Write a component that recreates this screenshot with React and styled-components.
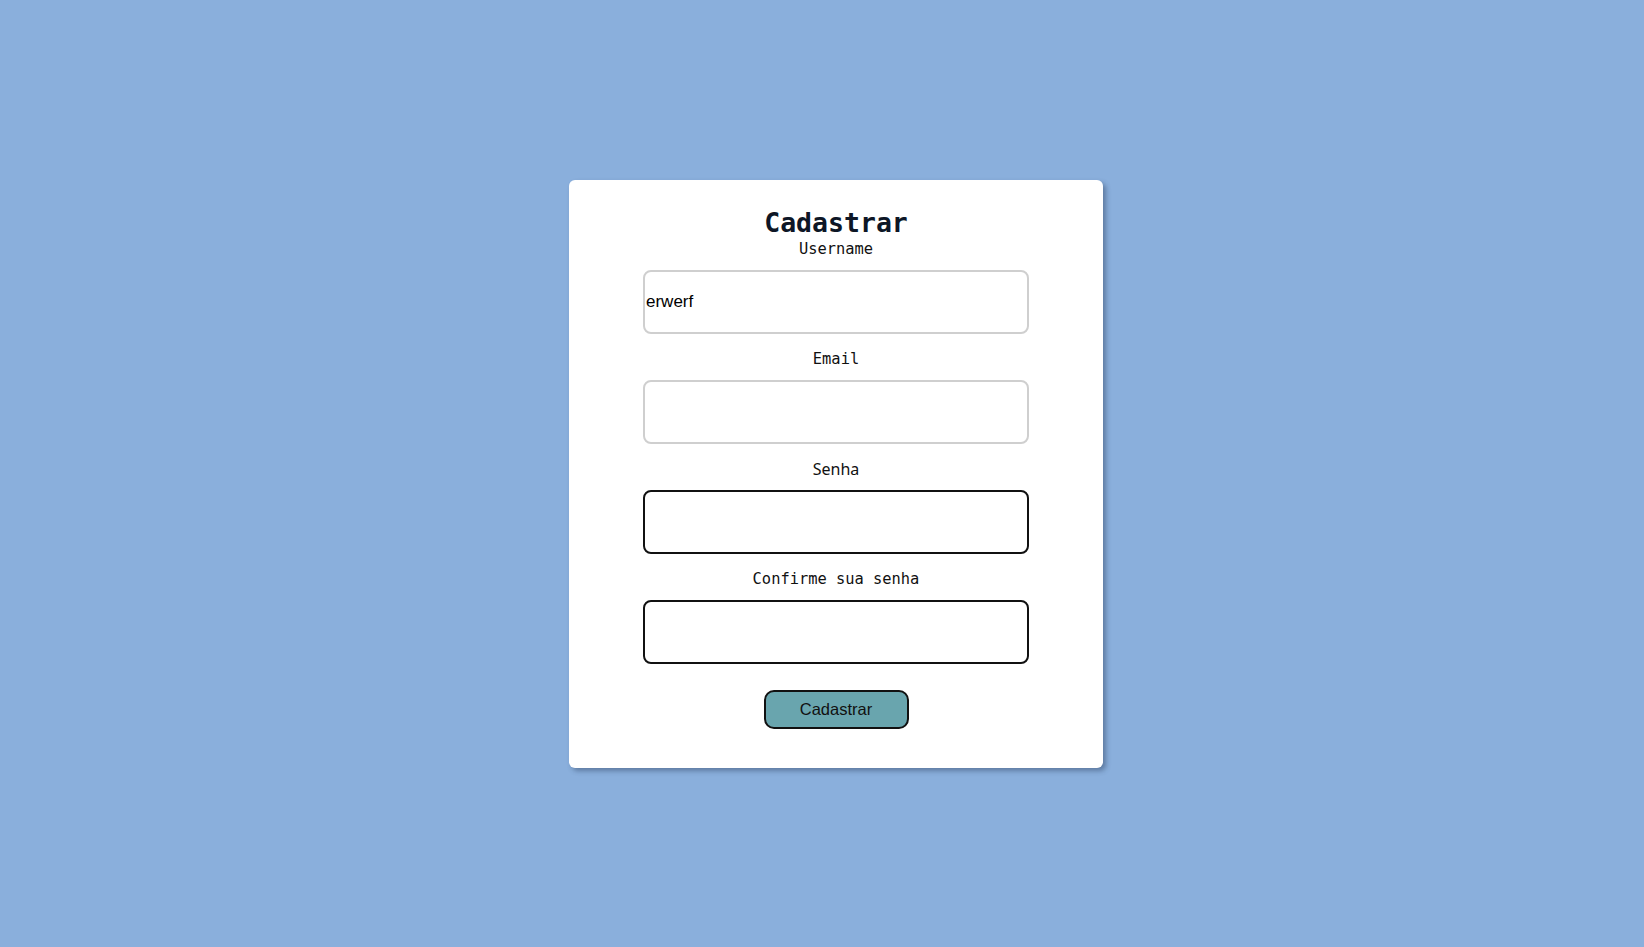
import React, { useState } from 'react';
import styled, { createGlobalStyle } from 'styled-components';

const GlobalStyle = createGlobalStyle`
  html, body {
    margin: 0;
    padding: 0;
  }
  body {
    background-color: #8aafdc;
    font-family: 'DejaVu Sans Mono', monospace;
  }
`;

const Page = styled.main`
  min-height: 947px;
  display: flex;
  align-items: center;
  justify-content: center;
  padding-left: 28px;
  box-sizing: border-box;
`;

const Card = styled.form`
  width: 534px;
  box-sizing: border-box;
  background-color: #ffffff;
  border-radius: 6px;
  box-shadow: 3px 3px 5px rgba(40, 60, 90, 0.45);
  padding: 28px 0 39px;
  display: flex;
  flex-direction: column;
  align-items: center;
`;

const Title = styled.h1`
  margin: 0 0 2px;
  font-family: 'DejaVu Sans Mono', monospace;
  font-size: 26.5px;
  line-height: 30px;
  font-weight: 700;
  color: #0d1626;
`;

const Label = styled.label`
  display: block;
  font-family: ${(p) => (p.$sans ? "'Noto Sans', sans-serif" : "'DejaVu Sans Mono', monospace")};
  font-size: ${(p) => (p.$sans ? '16px' : '15.4px')};
  line-height: 18px;
  color: #111;
  margin-bottom: 12px;
  text-align: center;
`;

const Input = styled.input`
  display: block;
  width: 386px;
  height: 64px;
  box-sizing: border-box;
  margin-bottom: 16px;
  padding: 0 1px;
  font-family: 'Liberation Sans', Arial, sans-serif;
  font-size: 17px;
  color: #000;
  background: #fff;
  border: 2px solid ${(p) => (p.$dark ? '#111' : '#cfcfcf')};
  border-radius: 8px;
  outline: none;
`;

const Button = styled.button`
  margin-top: 10px;
  width: 145px;
  height: 39px;
  background-color: #69a5ae;
  border: 2px solid #111;
  border-radius: 10px;
  font-family: 'Liberation Sans', Arial, sans-serif;
  font-size: 16.5px;
  color: #111;
  cursor: pointer;
`;

export default function App() {
  const [username, setUsername] = useState('erwerf');

  return (
    <>
      <GlobalStyle />
      <Page>
        <Card onSubmit={(e) => e.preventDefault()}>
          <Title>Cadastrar</Title>
          <Label htmlFor="username">Username</Label>
          <Input
            id="username"
            type="text"
            value={username}
            onChange={(e) => setUsername(e.target.value)}
          />
          <Label htmlFor="email">Email</Label>
          <Input id="email" type="email" />
          <Label htmlFor="senha" $sans>Senha</Label>
          <Input id="senha" type="password" $dark />
          <Label htmlFor="confirme">Confirme sua senha</Label>
          <Input id="confirme" type="password" $dark />
          <Button type="submit">Cadastrar</Button>
        </Card>
      </Page>
    </>
  );
}
